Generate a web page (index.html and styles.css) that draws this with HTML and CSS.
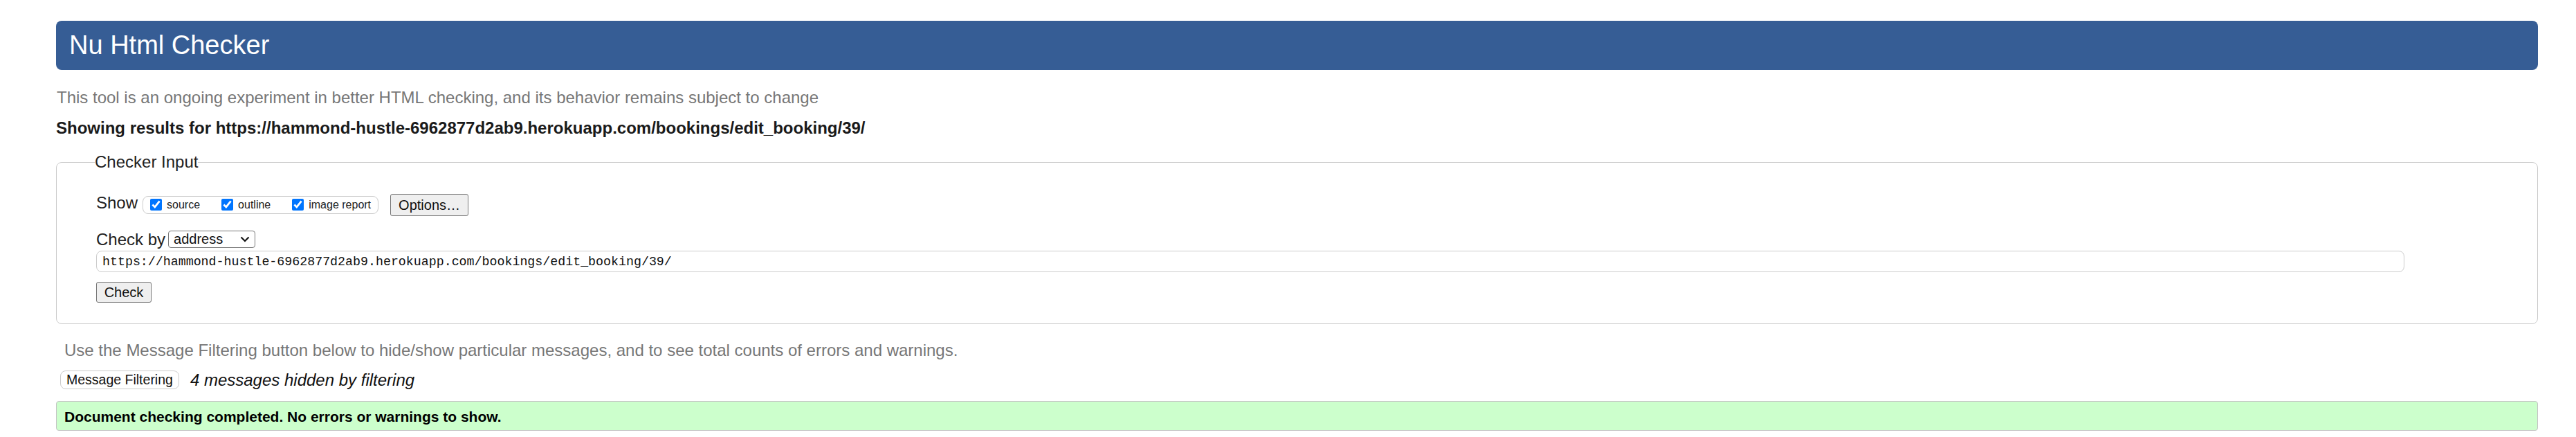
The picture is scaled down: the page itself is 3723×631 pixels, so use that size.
FILE: index.html
```html
<!DOCTYPE html>
<html lang="en">
<head>
<meta charset="utf-8">
<title>Nu Html Checker</title>
<link rel="stylesheet" href="styles.css">
</head>
<body>
  <h1 class="masthead">Nu Html Checker</h1>
  <p class="intro">This tool is an ongoing experiment in better HTML checking, and its behavior remains subject to change</p>
  <h2 class="results-for">Showing results for https://hammond-hustle-6962877d2ab9.herokuapp.com/bookings/edit_booking/39/</h2>

  <fieldset class="checker-input">
    <legend class="legend">Checker Input</legend>
    <div class="row show-row">
      <span class="row-label show-label">Show</span>
      <span class="opt-group">
        <label class="opt"><input type="checkbox" class="cb" checked><span>source</span></label>
        <label class="opt"><input type="checkbox" class="cb" checked><span>outline</span></label>
        <label class="opt"><input type="checkbox" class="cb" checked><span>image report</span></label>
      </span>
      <button class="btn btn-options" type="button">Options…</button>
    </div>
    <div class="row checkby-row">
      <span class="row-label checkby-label">Check by</span>
      <span class="select-box"><span class="select-text">address</span><svg class="chev" width="14" height="9" viewBox="0 0 14 9"><path d="M1.5 1.5 L7 7 L12.5 1.5" fill="none" stroke="#111" stroke-width="2.2"/></svg></span>
    </div>
    <div class="row url-row">
      <input class="url" type="text" value="https://hammond-hustle-6962877d2ab9.herokuapp.com/bookings/edit_booking/39/">
    </div>
    <div class="row submit-row">
      <button class="btn btn-check" type="submit">Check</button>
    </div>
  </fieldset>

  <p class="filter-note">Use the Message Filtering button below to hide/show particular messages, and to see total counts of errors and warnings.</p>
  <div class="filter-row">
    <button class="filter-btn" type="button">Message Filtering</button>
    <span class="hidden-count">4 messages hidden by filtering</span>
  </div>
  <div class="success">Document checking completed. No errors or warnings to show.</div>
</body>
</html>
```

FILE: styles.css
```css
html, body {
  margin: 0;
  background: #fff;
}
body {
  padding: 30px 55px 0 81px;
  font-family: Arial, "Liberation Sans", sans-serif;
  font-size: 24px;
  color: #222;
}

.masthead {
  margin: 0;
  height: 71px;
  line-height: 71px;
  padding-left: 19px;
  background: #365d95;
  color: #fff;
  font-size: 38px;
  font-weight: normal;
  border-radius: 8px;
}

.intro {
  margin: 26px 0 0 1px;
  font-size: 24px;
  line-height: 28px;
  color: #777;
}

.results-for {
  margin: 16px 0 0 0;
  font-size: 24px;
  line-height: 28px;
  font-weight: bold;
  color: #1a1a1a;
}

.checker-input {
  margin: 21px 0 0 0;
  padding: 32px 56px 30px 57px;
  border: 1px solid #cbcbcb;
  border-radius: 8px;
  min-width: 0;
}

.legend {
  padding: 0;
  margin-left: -2px;
  font-size: 24px;
  line-height: 28px;
  color: #222;
}

.row {
  display: flex;
  align-items: center;
}

.row-label {
  font-size: 24px;
  color: #222;
}

.show-row {
  height: 32px;
}
.show-label {
  line-height: 28px;
  margin-bottom: 7px;
}

.opt-group {
  display: inline-flex;
  align-items: center;
  box-sizing: border-box;
  height: 26px;
  margin-left: 7px;
  padding: 0 10px;
  gap: 31px;
  border: 1px solid #cbcbcb;
  border-radius: 8px;
}

.opt {
  display: flex;
  align-items: flex-end;
  gap: 7px;
  height: 18px;
  font-size: 16px;
  line-height: 18px;
  color: #222;
}

.cb {
  width: 17px;
  height: 17px;
  margin: 0 0 1px 0;
  accent-color: #0075ff;
  align-self: flex-start;
}
.opt span {
  margin-top: 2px;
}

.btn {
  box-sizing: border-box;
  font-family: Arial, "Liberation Sans", sans-serif;
  font-size: 20px;
  color: #111;
  background: #efefef;
  border: 1px solid #767676;
  border-radius: 3px;
  padding: 0;
}

.btn-options {
  margin-left: 17px;
  width: 113px;
  height: 32px;
}

.checkby-row {
  margin-top: 21px;
  height: 25px;
}
.checkby-label {
  line-height: 25px;
}

.select-box {
  box-sizing: border-box;
  display: inline-flex;
  align-items: center;
  justify-content: space-between;
  margin-left: 4px;
  width: 126px;
  height: 25px;
  padding: 0 7px 0 7px;
  border: 1px solid #767676;
  border-radius: 4px;
  background: #fff;
  font-size: 20px;
  color: #111;
}
.select-text {
  line-height: 23px;
}

.url-row {
  margin-top: 4px;
}
.url {
  box-sizing: border-box;
  width: 3336px;
  max-width: 100%;
  height: 31px;
  padding: 0 8px;
  margin: 0;
  border: 1px solid #cbcbcb;
  border-radius: 8px;
  font-family: "Liberation Mono", "DejaVu Sans Mono", monospace;
  font-size: 18.3px;
  color: #111;
  background: #fff;
  outline: none;
}

.submit-row {
  margin-top: 14px;
}
.btn-check {
  width: 80px;
  height: 30px;
}

.filter-note {
  margin: 24px 0 0 0;
  padding-left: 12px;
  font-size: 24px;
  line-height: 28px;
  color: #777;
}

.filter-row {
  display: flex;
  align-items: center;
  margin-top: 15px;
  padding-left: 6px;
  height: 27px;
}
.filter-btn {
  box-sizing: border-box;
  height: 27px;
  padding: 0 8px;
  background: #fff;
  border: 1px solid #cbcbcb;
  border-radius: 8px;
  font-family: Arial, "Liberation Sans", sans-serif;
  font-size: 19.5px;
  color: #111;
}
.hidden-count {
  margin-left: 16px;
  font-size: 24px;
  font-style: italic;
  color: #111;
  line-height: 27px;
}

.success {
  margin-top: 17px;
  box-sizing: border-box;
  height: 43px;
  padding: 10px 11px 7px;
  background: #ccffcc;
  border: 1px solid #c4c4c4;
  border-radius: 4px;
  font-size: 21px;
  line-height: 24px;
  font-weight: bold;
  color: #000;
}
```
